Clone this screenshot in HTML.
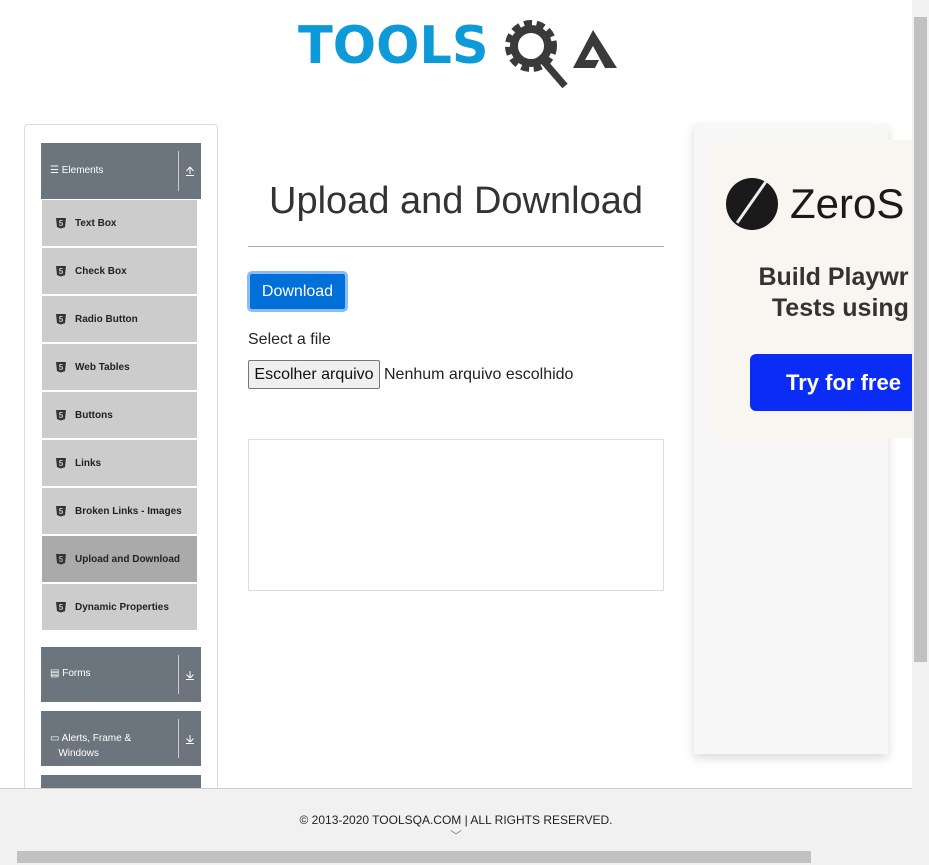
<!DOCTYPE html>
<html><head><meta charset="utf-8"><style>
*{margin:0;padding:0;box-sizing:border-box}
body{width:929px;height:865px;overflow:hidden;background:#fff;font-family:"Liberation Sans",sans-serif;position:relative}
.a{position:absolute}
.card{left:24px;top:124px;width:194px;height:700px;border:1px solid #ddd;border-radius:4px}
.hdr{left:41px;width:160px;background:#6c757d;color:#fff;font-size:10px}
.hdr .sep{position:absolute;right:22px;top:8px;bottom:8px;border-left:1px solid #ccc}
.hdr svg{position:absolute;right:6px;top:50%;margin-top:-5px}
.it{left:42px;width:155px;height:46px;background:#ccc;font-size:10px;font-weight:bold;color:#222;display:flex;align-items:center;padding-left:14px}
.it i{display:inline-block;width:10px;height:11px;background:#333;margin-right:9px;clip-path:polygon(0 0,100% 0,90% 88%,50% 100%,10% 88%);color:#ccc;font-style:normal;font-size:8px;text-align:center;line-height:11px}
</style></head><body>
<div class="a" style="left:298px;top:20px;font-size:52px;font-weight:900;color:#0e9ad8;line-height:52px;font-family:'DejaVu Sans',sans-serif;transform:scaleX(0.98);transform-origin:left">TOOLS</div>
<svg class="a" style="left:503px;top:16px" width="120" height="74" viewBox="0 0 120 74"><circle cx="28" cy="30" r="20" fill="none" stroke="#3a3a3a" stroke-width="12" stroke-dasharray="7 4"/><circle cx="28" cy="30" r="17" fill="none" stroke="#3a3a3a" stroke-width="8"/><line x1="36" y1="40" x2="62" y2="70" stroke="#3a3a3a" stroke-width="7"/><polygon points="70,52 90,14 114,52 102,52 90,30 82,44 96,44 92,52" fill="#3a3a3a"/></svg>
<div class="a card"></div>
<div class="a hdr" style="top:143px;height:56px"><span style="position:absolute;left:9px;top:22px">☰ Elements</span><div class="sep"></div><svg width="10" height="10" viewBox="0 0 10 10"><path d="M5 1L1.5 5M5 1L8.5 5M5 1V8M1 9.5H9" stroke="#fff" fill="none"/></svg></div>
<div class="a it" style="top:200px"><i>5</i>Text Box</div>
<div class="a it" style="top:248px"><i>5</i>Check Box</div>
<div class="a it" style="top:296px"><i>5</i>Radio Button</div>
<div class="a it" style="top:344px"><i>5</i>Web Tables</div>
<div class="a it" style="top:392px"><i>5</i>Buttons</div>
<div class="a it" style="top:440px"><i>5</i>Links</div>
<div class="a it" style="top:488px"><i>5</i>Broken Links - Images</div>
<div class="a it" style="top:536px;background:#aaa"><i style="color:#aaa">5</i>Upload and Download</div>
<div class="a it" style="top:584px"><i>5</i>Dynamic Properties</div>
<div class="a hdr" style="top:647px;height:55px"><span style="position:absolute;left:9px;top:21px">▤ Forms</span><div class="sep"></div><svg width="10" height="10" viewBox="0 0 10 10"><path d="M5 8L1.5 4.5M5 8L8.5 4.5M5 8V1M1 9.5H9" stroke="#fff" fill="none"/></svg></div>
<div class="a hdr" style="top:711px;height:55px"><span style="position:absolute;left:9px;top:20px;line-height:15px">▭ Alerts, Frame &amp;<br>&nbsp;&nbsp;&nbsp;Windows</span><div class="sep"></div><svg width="10" height="10" viewBox="0 0 10 10"><path d="M5 8L1.5 4.5M5 8L8.5 4.5M5 8V1M1 9.5H9" stroke="#fff" fill="none"/></svg></div>
<div class="a hdr" style="top:775px;height:20px"></div>
<div class="a" style="left:248px;top:180px;width:416px;text-align:center;font-size:38px;color:#333">Upload and Download</div>
<div class="a" style="left:248px;top:246px;width:416px;border-top:1px solid #aaa"></div>
<div class="a" style="left:247px;top:271px;width:101px;height:41px;border:3px solid #8cbcf5;border-radius:5px;background:#0070d8;color:#fff;font-size:16px;text-align:center;line-height:35px">Download</div>
<div class="a" style="left:248px;top:331px;font-size:16px;color:#212529">Select a file</div>
<div class="a" style="left:248px;top:360px;width:132px;height:29px;border:1px solid #777;border-radius:2px;background:#efefef;font-size:16px;text-align:center;line-height:27px;color:#111">Escolher arquivo</div>
<div class="a" style="left:384px;top:366px;font-size:16px;color:#222">Nenhum arquivo escolhido</div>
<div class="a" style="left:248px;top:439px;width:416px;height:152px;border:1px solid #ddd"></div>
<div class="a" style="left:694px;top:124px;width:194px;height:630px;background:#f7f7f7;box-shadow:0 4px 10px rgba(0,0,0,.15)"></div>
<div class="a" style="left:712px;top:140px;width:200px;height:298px;background:#f9f6f1;overflow:hidden">
<div class="a" style="left:14px;top:38px;width:52px;height:52px;border-radius:50%;background:#1a1a1a"></div>
<div class="a" style="left:14px;top:60px;width:52px;height:3px;background:#eee;transform:rotate(-55deg)"></div>
<div class="a" style="left:78px;top:40px;font-size:42px;color:#1a1a1a;white-space:nowrap">ZeroS</div>
<div class="a" style="left:46px;top:122px;font-size:25px;color:#333;line-height:31px;white-space:nowrap;text-align:center;font-weight:bold">Build Playwr<br>&nbsp;&nbsp;Tests using</div>
<div class="a" style="left:38px;top:214px;width:180px;height:57px;background:#0a2cf5;border-radius:6px;color:#fff;font-size:22px;font-weight:bold;line-height:57px;padding-left:36px">Try for free</div>
</div>
<div class="a" style="left:0;top:788px;width:912px;height:61px;background:#f1f1f1;border-top:1px solid #ccc;text-align:center;font-size:12px;color:#222;padding-top:24px">© 2013-2020 TOOLSQA.COM | ALL RIGHTS RESERVED.<br><span style="color:#888">﹀</span></div>
<div class="a" style="left:912px;top:0;width:17px;height:849px;background:#f1f1f1"><div class="a" style="left:2px;top:17px;width:13px;height:645px;background:#c1c1c1"></div></div>
<div class="a" style="left:0;top:849px;width:929px;height:16px;background:#f1f1f1"><div class="a" style="left:17px;top:2px;width:794px;height:12px;background:#c1c1c1"></div></div>
</body></html>
